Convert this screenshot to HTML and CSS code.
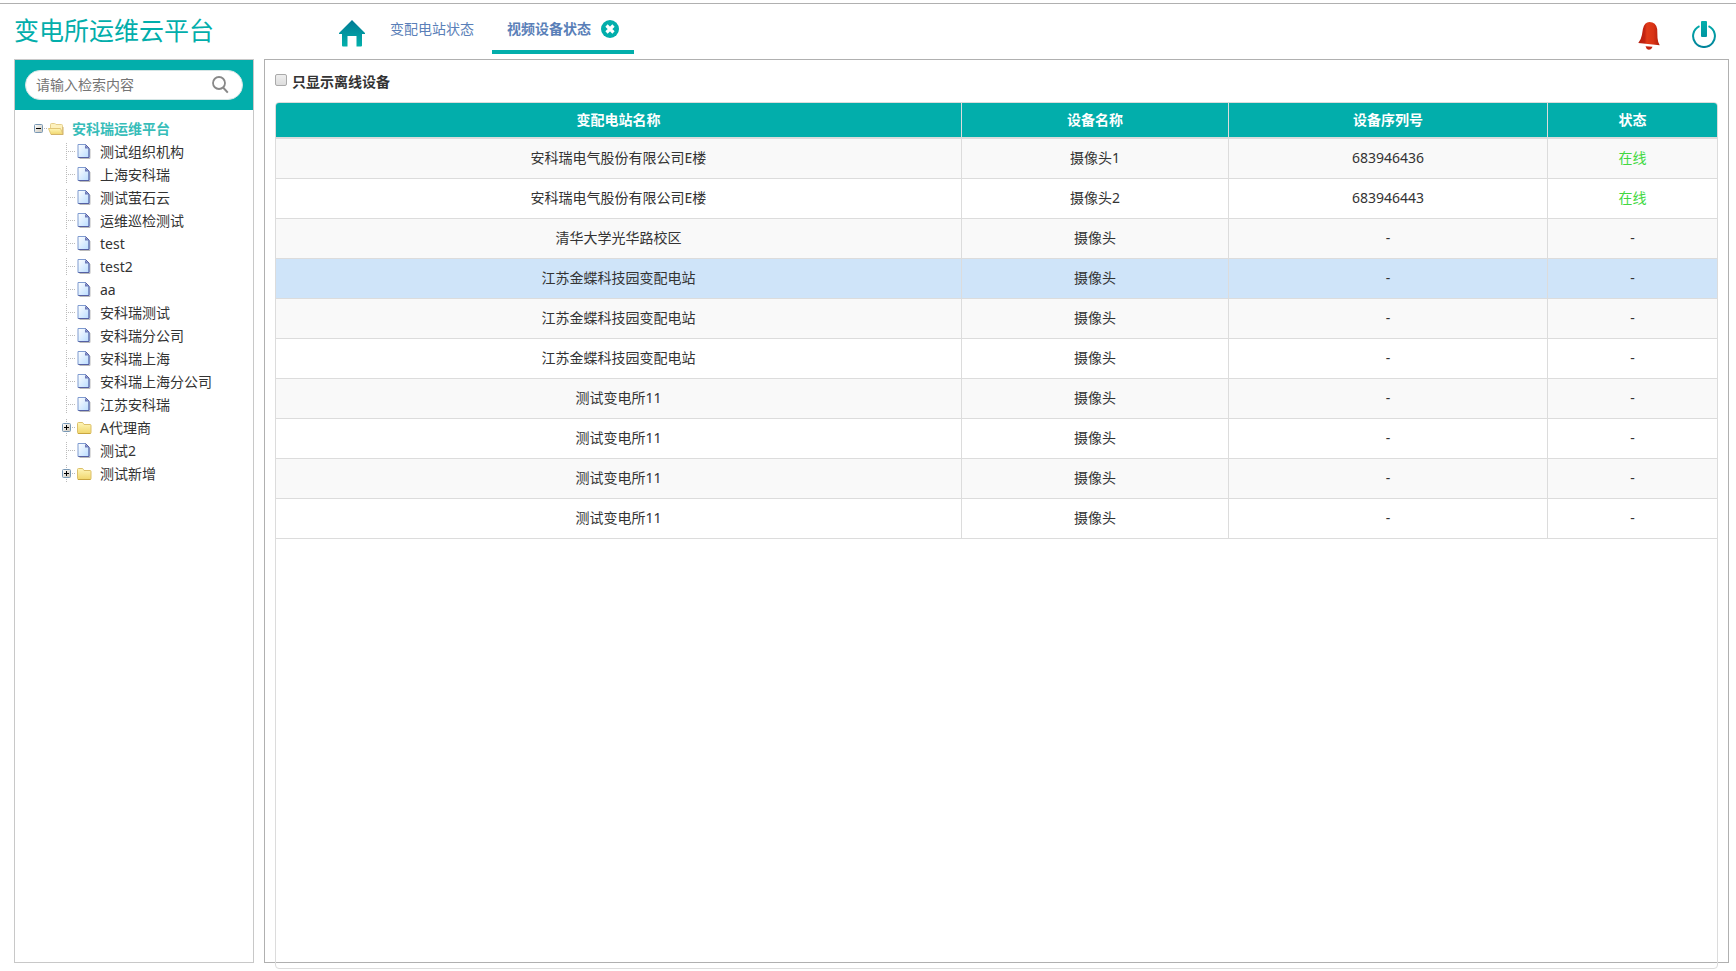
FILE: index.html
```html
<!DOCTYPE html>
<html lang="zh-CN">
<head>
<meta charset="utf-8">
<title>变电所运维云平台</title>
<link rel="stylesheet" href="styles.css">
</head>
<body>
<svg class="defs" aria-hidden="true">
  <defs>
    <linearGradient id="teal" x1="0" y1="0" x2="0" y2="1"><stop offset="0" stop-color="#007a94"/><stop offset="1" stop-color="#02b0ab"/></linearGradient>
    <linearGradient id="power" gradientUnits="userSpaceOnUse" x1="0" y1="0" x2="0" y2="27"><stop offset="0" stop-color="#02b0ab"/><stop offset="1" stop-color="#00829a"/></linearGradient>
    <linearGradient id="bell" x1="0" y1="0" x2="1" y2="0"><stop offset="0" stop-color="#b51c0c"/><stop offset=".3" stop-color="#c52411"/><stop offset=".4" stop-color="#e03a18"/><stop offset=".7" stop-color="#d93315"/><stop offset="1" stop-color="#b01c0c"/></linearGradient>
    <linearGradient id="page" x1="0" y1="0" x2="1" y2="1"><stop offset="0" stop-color="#fff"/><stop offset="1" stop-color="#b9dcff"/></linearGradient>
    <linearGradient id="folder" x1="0" y1="0" x2="0" y2="1"><stop offset="0" stop-color="#fff6b8"/><stop offset="1" stop-color="#f0d66c"/></linearGradient>
    <linearGradient id="box" x1="0" y1="0" x2="1" y2="1"><stop offset="0" stop-color="#fff"/><stop offset="1" stop-color="#c9c4b8"/></linearGradient>
  </defs>
  <symbol id="i-page" viewBox="0 0 14 15"><path d="M2 14.5h10.5V5" fill="none" stroke="#bbb"/><path d="M.5.500h7.500l3.500 3.500v9.500H.5z" fill="url(#page)" stroke="#7f9bd0"/><path d="M8 .5l3.500 3.500v9.500H1" fill="none" stroke="#5560a4"/><path d="M7.500 1v3.500h4z" fill="#6f7cba"/></symbol>
  <symbol id="i-folder" viewBox="0 0 15 14"><path d="M.5 2.500q0-1 1-1h3.500q1 0 1.500 1l.5 1h6q1 0 1 1v7q0 1-1 1h-11.500q-1 0-1-1z" fill="url(#folder)" stroke="#dcc06a"/><path d="M1 12.500h12.500" stroke="#c9a640"/></symbol>
  <symbol id="i-open" viewBox="0 0 16 14"><path d="M2.500 9V2.500q0-1 1-1h3q1 0 1.500 1h5.500q1 0 1 1V11" fill="#fdf1bd" stroke="#e5cf8c"/><path d="M.5 6.500h12l2.500 6h-12z" fill="url(#folder)" stroke="#e2c777"/><path d="M3 12.500h12V5" fill="none" stroke="#d2b36a"/></symbol>
  <symbol id="i-plus" viewBox="0 0 9 9"><rect x=".5" y=".5" width="8" height="8" rx="1" fill="url(#box)" stroke="#7898b5"/><path d="M2 4.500h5M4.500 2v5" stroke="#000"/></symbol>
  <symbol id="i-minus" viewBox="0 0 9 9"><rect x=".5" y=".5" width="8" height="8" rx="1" fill="url(#box)" stroke="#7898b5"/><path d="M2 4.500h5" stroke="#000"/></symbol>
</svg>

<header class="topbar">
  <h1 class="brand">变电所运维云平台</h1>
  <nav class="tabs">
    <a class="home" href="#" aria-label="首页"><svg width="26" height="27" viewBox="0 0 26 27"><path d="M13 0L26 13v1h-3v11.500q0 1-1 1h-4.500V16h-9v10.500H4q-1 0-1-1V14H0v-1z" fill="url(#teal)"/></svg></a>
    <a class="tab" href="#">变配电站状态</a>
    <div class="tab tab-active"><a class="tab-link" href="#">视频设备状态</a><button class="close" type="button" aria-label="关闭"><svg width="18" height="18" viewBox="0 0 18 18"><circle cx="9" cy="9" r="9" fill="#02aeab"/><path d="M5.500 5.500l7 7M12.500 5.500l-7 7" stroke="#fff" stroke-width="3.200"/></svg></button></div>
  </nav>
  <div class="actions">
    <button class="icon-btn" type="button" aria-label="告警"><svg width="22" height="29" viewBox="0 -1 22 29"><path d="M7.500 24.200l7 .6q-1 3-3.800 3-2.400-.4-3.200-3.600z" fill="#c3210f"/><path d="M11.500 0q6.500.2 7.700 7l.3 9q.3 4 2.200 7.300L.3 21q3-4 3.600-8l1-6q1.500-6.800 6.600-7z" fill="url(#bell)"/></svg></button>
    <button class="icon-btn" type="button" aria-label="退出"><svg width="24" height="27" viewBox="0 0 24 27"><path d="M7.500 5.200a10.900 10.900 0 1 0 9 0" fill="none" stroke="url(#power)" stroke-width="2"/><rect x="9" y="0" width="6" height="16" rx="1" fill="url(#power)"/></svg></button>
  </div>
</header>

<div class="layout">
  <aside class="sidebar">
    <form class="search">
      <div class="search-box">
        <input class="search-input" type="text" placeholder="请输入检索内容" aria-label="请输入检索内容">
        <button class="search-btn" type="button" aria-label="搜索"><svg width="17" height="18" viewBox="0 0 17 18"><circle cx="7" cy="7" r="6" fill="none" stroke="#888" stroke-width="1.800"/><path d="M11.300 11.800l4.500 4.800" stroke="#888" stroke-width="2"/></svg></button>
      </div>
    </form>
    <ul class="tree">
      <li class="node root"><svg width="9" height="9"><use href="#i-minus"/></svg><i class="link"></i><svg width="16" height="14"><use href="#i-open"/></svg><a class="label" href="#">安科瑞运维平台</a></li>
      <li class="node"><i class="branch"></i><svg width="15" height="15"><use href="#i-page"/></svg><a class="label" href="#">测试组织机构</a></li>
      <li class="node"><i class="branch"></i><svg width="15" height="15"><use href="#i-page"/></svg><a class="label" href="#">上海安科瑞</a></li>
      <li class="node"><i class="branch"></i><svg width="15" height="15"><use href="#i-page"/></svg><a class="label" href="#">测试萤石云</a></li>
      <li class="node"><i class="branch"></i><svg width="15" height="15"><use href="#i-page"/></svg><a class="label" href="#">运维巡检测试</a></li>
      <li class="node"><i class="branch"></i><svg width="15" height="15"><use href="#i-page"/></svg><a class="label" href="#">test</a></li>
      <li class="node"><i class="branch"></i><svg width="15" height="15"><use href="#i-page"/></svg><a class="label" href="#">test2</a></li>
      <li class="node"><i class="branch"></i><svg width="15" height="15"><use href="#i-page"/></svg><a class="label" href="#">aa</a></li>
      <li class="node"><i class="branch"></i><svg width="15" height="15"><use href="#i-page"/></svg><a class="label" href="#">安科瑞测试</a></li>
      <li class="node"><i class="branch"></i><svg width="15" height="15"><use href="#i-page"/></svg><a class="label" href="#">安科瑞分公司</a></li>
      <li class="node"><i class="branch"></i><svg width="15" height="15"><use href="#i-page"/></svg><a class="label" href="#">安科瑞上海</a></li>
      <li class="node"><i class="branch"></i><svg width="15" height="15"><use href="#i-page"/></svg><a class="label" href="#">安科瑞上海分公司</a></li>
      <li class="node"><i class="branch"></i><svg width="15" height="15"><use href="#i-page"/></svg><a class="label" href="#">江苏安科瑞</a></li>
      <li class="node"><i class="branch"><svg width="9" height="9"><use href="#i-plus"/></svg></i><svg width="15" height="14"><use href="#i-folder"/></svg><a class="label" href="#">A代理商</a></li>
      <li class="node"><i class="branch"></i><svg width="15" height="15"><use href="#i-page"/></svg><a class="label" href="#">测试2</a></li>
      <li class="node"><i class="branch"><svg width="9" height="9"><use href="#i-plus"/></svg></i><svg width="15" height="14"><use href="#i-folder"/></svg><a class="label" href="#">测试新增</a></li>
    </ul>
  </aside>

  <main class="main">
    <label class="filter"><input class="check" type="checkbox">只显示离线设备</label>
    <div class="frame">
      <table class="grid">
        <colgroup><col class="c-site"><col class="c-name"><col class="c-serial"><col class="c-state"></colgroup>
        <thead><tr><th>变配电站名称</th><th>设备名称</th><th>设备序列号</th><th>状态</th></tr></thead>
        <tbody>
          <tr><td>安科瑞电气股份有限公司E楼</td><td>摄像头1</td><td>683946436</td><td class="online">在线</td></tr>
          <tr><td>安科瑞电气股份有限公司E楼</td><td>摄像头2</td><td>683946443</td><td class="online">在线</td></tr>
          <tr><td>清华大学光华路校区</td><td>摄像头</td><td>-</td><td>-</td></tr>
          <tr class="hover"><td>江苏金蝶科技园变配电站</td><td>摄像头</td><td>-</td><td>-</td></tr>
          <tr><td>江苏金蝶科技园变配电站</td><td>摄像头</td><td>-</td><td>-</td></tr>
          <tr><td>江苏金蝶科技园变配电站</td><td>摄像头</td><td>-</td><td>-</td></tr>
          <tr><td>测试变电所11</td><td>摄像头</td><td>-</td><td>-</td></tr>
          <tr><td>测试变电所11</td><td>摄像头</td><td>-</td><td>-</td></tr>
          <tr><td>测试变电所11</td><td>摄像头</td><td>-</td><td>-</td></tr>
          <tr><td>测试变电所11</td><td>摄像头</td><td>-</td><td>-</td></tr>
        </tbody>
      </table>
    </div>
  </main>
</div>
</body>
</html>
```

FILE: styles.css
```css
* { box-sizing: border-box; }

body {
  margin: 0;
  min-height: 100vh;
  padding: 3px 0 8px;
  display: flex;
  flex-direction: column;
  background: #fff;
  color: #333;
  font: 14px/20px "Noto Sans", "Noto Sans CJK SC", sans-serif;
}

a { color: inherit; text-decoration: none; }
button { padding: 0; border: 0; background: none; cursor: pointer; }
svg { display: block; flex: none; }
.defs { position: absolute; width: 0; height: 0; }

.topbar {
  display: flex;
  height: 56px;
  padding: 0 20px 0 14px;
  border-top: 1px solid #b0b0b0;
}
.brand {
  width: 325px;
  margin: 0;
  color: #02aeab;
  font-size: 25px;
  font-weight: 400;
  line-height: 53px;
}
.tabs { display: flex; flex: 1; align-items: flex-start; color: #5a7fb8; }
.home { margin: 16px 10px 0 0; }
.tab { padding: 15px 15px 0; }
.tab-active {
  display: flex;
  align-items: center;
  gap: 10px;
  height: 50px;
  margin-left: 3px;
  padding: 3px 15px 0;
  border-bottom: 4px solid #02aeab;
  font-weight: bold;
}
.actions { display: flex; align-items: flex-start; gap: 32px; padding-top: 17px; }

.layout {
  display: flex;
  flex: 1;
  gap: 10px;
  padding: 0 7px 0 14px;
}

.sidebar { width: 240px; flex: none; border: 1px solid #c8c8c8; }
.search { padding: 10px; background: #02aeab; }
.search-box {
  display: flex;
  align-items: center;
  height: 30px;
  padding: 0 13px 0 10px;
  border: 1px solid #d5e5e5;
  border-radius: 15px;
  background: #fff;
}
.search-input {
  flex: 1;
  min-width: 0;
  padding: 0;
  border: 0;
  outline: 0;
  background: none;
  color: #333;
  font: inherit;
}
.search-input::placeholder { color: #757575; }

.tree { margin: 0; padding: 7px 0; list-style: none; }
.node { display: flex; align-items: center; height: 23px; padding-left: 47px; }
.root { padding-left: 19px; color: #37bdb9; font-weight: bold; }
.link {
  width: 5px;
  height: 1px;
  background: repeating-linear-gradient(90deg, transparent 0 1px, #bbb 1px 2px);
}
.branch {
  display: flex;
  align-items: center;
  width: 15px;
  height: 17px;
  background:
    repeating-linear-gradient(#bbb 0 1px, transparent 1px 2px) 4px 0 / 1px 17px no-repeat,
    repeating-linear-gradient(90deg, #bbb 0 1px, transparent 1px 2px) 4px 8px / 9px 1px no-repeat;
}
.label { padding-left: 8px; }

.main {
  display: flex;
  flex: 1;
  flex-direction: column;
  min-width: 0;
  padding: 12px 10px 0;
  border: 1px solid #b0b0b0;
}
.filter { display: flex; align-items: center; align-self: flex-start; gap: 5px; font-weight: bold; }
.check {
  appearance: none;
  width: 12px;
  height: 12px;
  margin: 0 0 4px;
  border: 1px solid #aaa;
  border-radius: 2px;
  background: linear-gradient(#eee, #ddd);
}
.check:checked { background: #02aeab; }

.frame {
  flex: 1;
  margin: 10px 0 -7px;
  border: 1px solid #dcdcdc;
  border-radius: 4px;
  overflow: hidden;
}
.grid {
  width: 100%;
  border-spacing: 0;
  table-layout: fixed;
  text-align: center;
}
.c-site { width: 47.6%; }
.c-name { width: 18.53%; }
.c-serial { width: 22.14%; }
.grid th {
  height: 36px;
  padding: 0;
  border-right: 1px solid #dcdcdc;
  border-bottom: 2px solid #dcdcdc;
  background: #02aeab;
  color: #fff;
}
.grid td {
  height: 40px;
  padding: 0 0 2px;
  border-right: 1px solid #dcdcdc;
  border-bottom: 1px solid #dcdcdc;
}
.grid th:last-child, .grid td:last-child { border-right: 0; }
.grid tbody tr:nth-child(odd) { background: #f9f9f9; }
.grid tbody .hover, .grid tbody tr:hover { background: #cfe4f9; }
.grid .online { color: #42d942; }
```
